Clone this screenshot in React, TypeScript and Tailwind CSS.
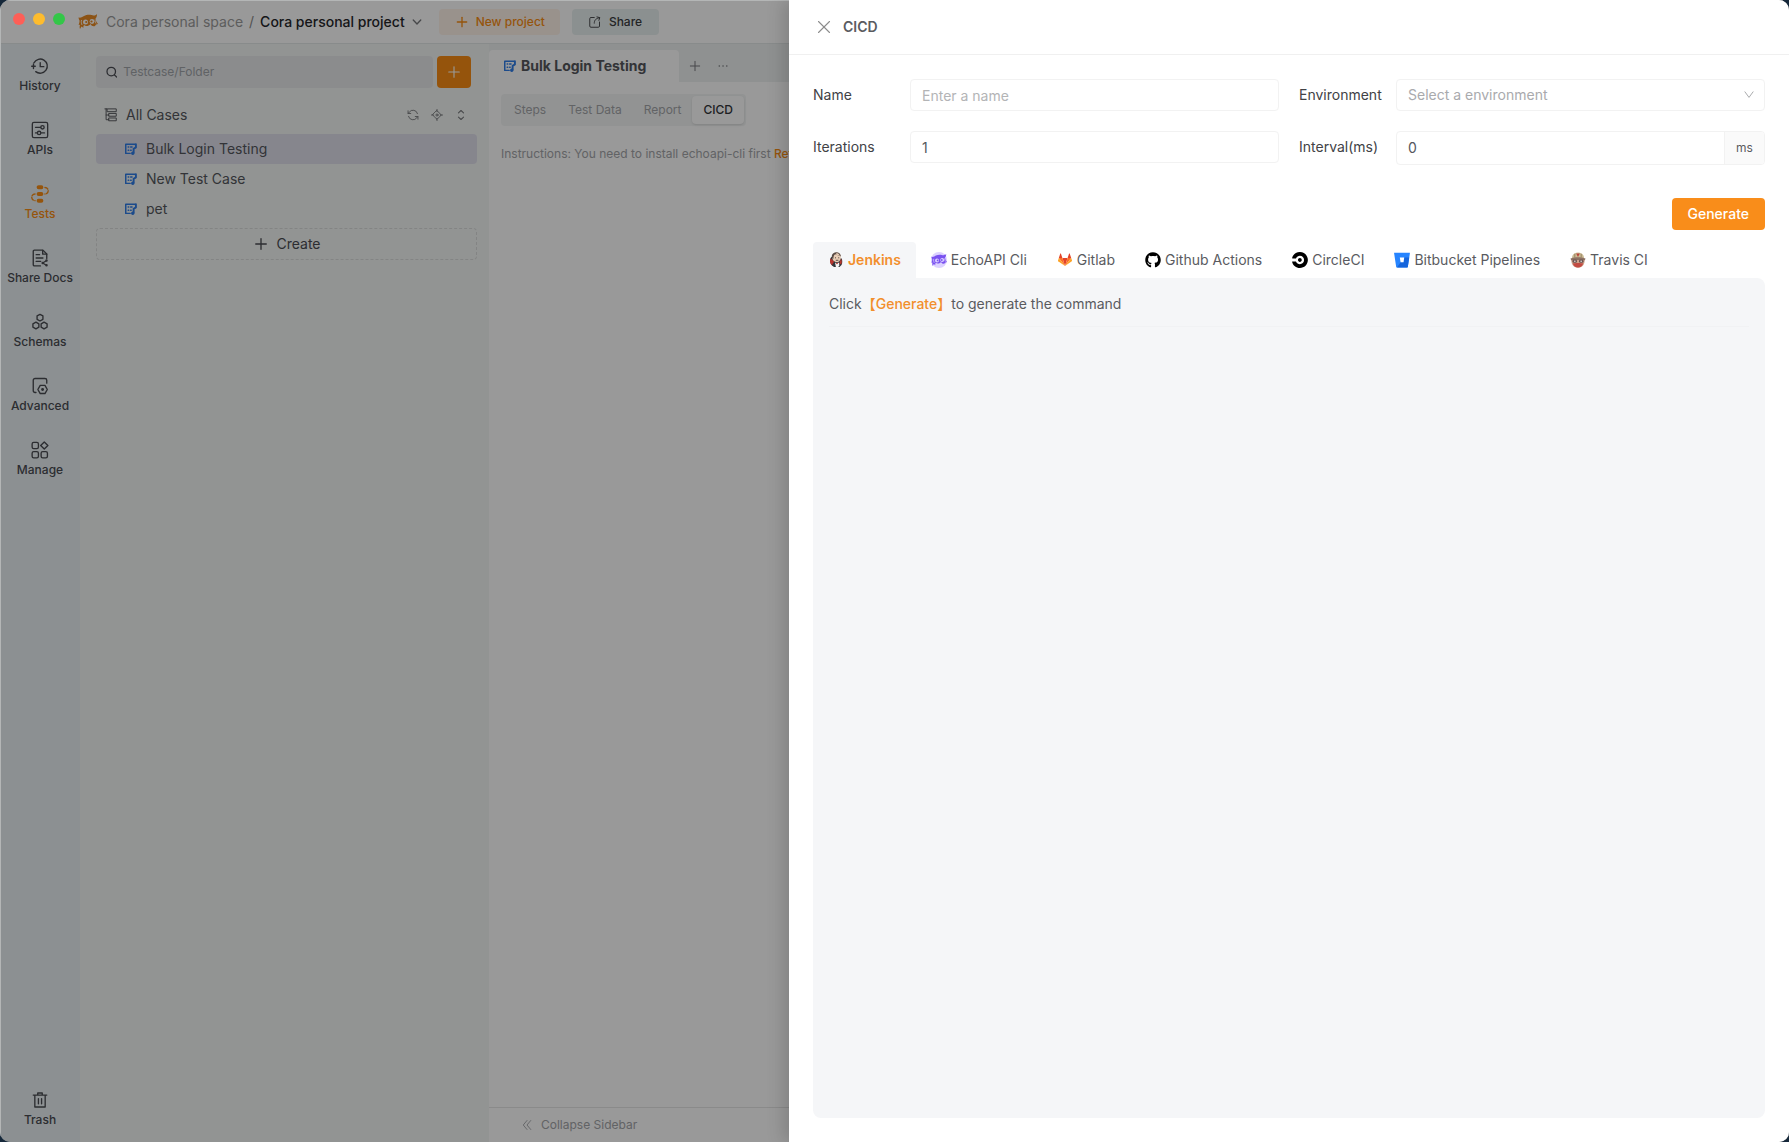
import { useState } from "react";
import type { ReactNode, SVGProps } from "react";
import { Plus, X } from "lucide-react";
import { FaGithub } from "react-icons/fa";
import { SiCircleci } from "react-icons/si";

// Shared wrapper for the 16px line icons
function Line({ children, ...props }: SVGProps<SVGSVGElement> & { children: ReactNode }) {
  return (
    <svg
      viewBox="0 0 16 16"
      fill="none"
      stroke="currentColor"
      strokeWidth="1.2"
      strokeLinecap="round"
      strokeLinejoin="round"
      aria-hidden="true"
      {...props}
    >
      {children}
    </svg>
  );
}

const HistoryIcon = () => (
  <Line className="size-[18px]">
    <path d="M2.6 5.2A6.3 6.3 0 1 1 4.2 13" />
    <path d="M2.2 6.2v4M.6 8.2h3.2" />
    <path d="M8.2 5v3.6h3.2" />
  </Line>
);

const ApisIcon = () => (
  <Line className="size-[18px]">
    <rect x="1.2" y="1.2" width="13.6" height="13.6" rx="1.4" />
    <path d="M4 5.6h4.6M4 10.6h1.6M8.8 10.6H12" />
    <circle cx="10.2" cy="5.6" r="1.5" />
    <circle cx="7.2" cy="10.6" r="1.5" />
  </Line>
);

const TestsIcon = () => (
  <Line className="size-[18px]">
    <rect x="5.6" y=".8" width="4.8" height="2.4" rx="1.2" fill="currentColor" />
    <rect x="5.6" y="6.8" width="4.8" height="2.4" rx="1.2" fill="currentColor" />
    <rect x="5.6" y="12.8" width="4.8" height="2.4" rx="1.2" fill="currentColor" />
    <path d="M12.4 2.2a2.9 2.9 0 0 1 0 5.800" strokeDasharray="3 1.400" />
    <path d="M3.6 8a2.9 2.9 0 0 0 0 5.900" strokeDasharray="3 1.400" />
  </Line>
);

const DocsIcon = () => (
  <Line className="size-[18px]">
    <path d="M8.4 15H3a1 1 0 0 1-1-1V2a1 1 0 0 1 1-1h7.6L14 4.4v4" />
    <path d="M10.4 1.2v3.4H14M4.6 5h3M4.6 8h6M4.6 11h4" />
    <path d="M13.6 10.4 10.4 12.4l3.2 2" />
    <circle cx="13.8" cy="10.3" r=".5" />
    <circle cx="10.4" cy="12.4" r=".5" />
    <circle cx="13.8" cy="14.5" r=".5" />
  </Line>
);

const SchemasIcon = () => (
  <Line className="size-[18px]">
    <path d="M8 1.200l2.600 1.400v3L8 7.100 5.400 5.600v-3z" />
    <path d="M4.400 8.100 7 9.600v3l-2.600 1.500-2.700-1.500v-3z" />
    <path d="M11.600 8.100l2.700 1.500v3l-2.700 1.500L9 12.600v-3z" />
  </Line>
);

const AdvancedIcon = () => (
  <Line className="size-[18px]">
    <path d="M4.400 13.800H3.600A1.600 1.600 0 0 1 2 12.200V2.900a1.600 1.600 0 0 1 1.600-1.600h8.800A1.600 1.600 0 0 1 14 2.900v2.600" />
    <path d="M8.200 7.500h4.200l2.100 3.600-2.100 3.600H8.200l-2.100-3.600z" />
    <circle cx="10.300" cy="11.100" r=".7" fill="currentColor" />
  </Line>
);

const ManageIcon = () => (
  <Line className="size-[18px]">
    <rect x="1" y="1.2" width="5.6" height="5.6" rx="1.4" />
    <path d="M11.8.8 15 4l-3.2 3.2L8.6 4z" />
    <rect x="1" y="9.4" width="5.6" height="5.6" rx="1.4" />
    <rect x="9" y="9.4" width="5.6" height="5.6" rx="1.4" />
  </Line>
);

const TrashIcon = () => (
  <Line className="size-[18px]">
    <path d="M2 3.6h12M6 3.4V1.8h4v1.600M3.400 3.800v10.400h9.200V3.800M6.600 6.800v4.600M9.400 6.800v4.600" />
  </Line>
);

const CaseIcon = () => (
  <Line className="size-3.5 shrink-0 text-[#2f7de8]" strokeWidth="1.700">
    <path d="M7 13H2V2.600h10.600" />
    <path d="M4.800 5.800h.6M7.600 5.800h1.600M4.800 9.400h.6M7.600 9.400h.6" />
    <path d="M13.600 2.600v3.600l-2.600 1.600v4.600" strokeWidth="2.200" />
    <circle cx="10" cy="12.800" r="1.100" fill="currentColor" />
  </Line>
);

const TreeIcon = () => (
  <Line className="size-3.5" strokeWidth="1.1">
    <path d="M2.400 1v12.400h3.200M2.400 8h3.200M1 1h2" />
    <rect x="4" y="1" width="10" height="3.2" />
    <rect x="5.8" y="6.2" width="8.2" height="3.2" />
    <rect x="5.8" y="11.4" width="8.2" height="3.2" />
  </Line>
);

const RefreshIcon = () => (
  <Line className="size-3">
    <path d="M14 6.200A6.200 6.200 0 0 0 3 4.200L1.400 6M1.400 2.400V6H5" />
    <path d="M2 9.800a6.200 6.200 0 0 0 11 2l1.600-1.800M14.600 13.600V10H11" />
  </Line>
);

const LocateIcon = () => (
  <Line className="size-3">
    <path d="M8 2.200 13.800 8 8 13.800 2.200 8zM8 .6v3M8 12.400v3M.6 8h3M12.400 8h3" />
    <circle cx="8" cy="8" r="1.4" />
  </Line>
);

const SortIcon = () => (
  <Line className="size-3" strokeWidth="1.4">
    <path d="M4.600 5.200 8 2l3.400 3.200M4.600 10.800 8 14l3.400-3.200" />
  </Line>
);

const ShareIcon = () => (
  <Line className="size-3">
    <path d="M7 2H2.600A1.600 1.600 0 0 0 1 3.600v9.800A1.600 1.600 0 0 0 2.600 15h9.800a1.600 1.600 0 0 0 1.600-1.600V8" />
    <path d="M7 9.600c0-4 2-6.400 7-7.200M10.600 1.200l3.800 1-1.200 3.600" />
  </Line>
);

function OwlMark({ className, eye }: { className: string; eye: string }) {
  return (
    <svg viewBox="0 0 40 30" className={className} aria-hidden="true">
      <path
        d="M1 7c5 1 8-1 11-3 7-4 15-2 19-1 3 0 5-1 7-3 0 4-1 7-3 9 1 5 2 8 5 11l-4 1-2 3c-4 1-7 0-9-4-4 5-10 5-13 2-1 2-2 4-1 6l-4-3-3 5c-1-3-1-5 0-8l-3-1c2-3 2-5 2-8-1-2-2-4-2-6z"
        fill="currentColor"
      />
      <circle cx="15" cy="16" r="5" fill={eye} />
      <circle cx="28" cy="15" r="4.800" fill={eye} />
      <circle cx="16.500" cy="16" r="2.200" fill="currentColor" />
      <circle cx="27" cy="15" r="2.200" fill="currentColor" />
      <path d="M7 12c-1 4 0 7 1 10M34 11c0 4 1 6 2 8" stroke={eye} strokeWidth="1.800" fill="none" />
    </svg>
  );
}

const JenkinsLogo = () => (
  <svg viewBox="0 0 16 16" className="size-4" aria-hidden="true">
    <path d="M3.400 5C1.400 7 1.600 11 4 13.600L6 15h5.500l2-2c1-2 1-4.500.2-6.500z" fill="#34353a" />
    <path d="M2.600 6.500c-1.200 2-.6 5 1.200 6.800l2.400-3.800z" fill="#b8362f" />
    <path d="M13 6.800c1 1.800 1 3.800.2 5.400l-2-.6z" fill="#b8362f" />
    <path d="M4 5c0-3 2-4.500 4.400-4.500S12.800 2 12.800 5.200c0 2.800-1.700 5-4 5S4 8 4 5z" fill="#e8cdb6" />
    <path d="M3.800 6C3.200 2 5.800.2 8.400.2c2.600 0 4.600 1.700 4.500 4.600l-1-1.300c-1.800.5-3.800-.8-4.800-1.200C6 3 5.600 4 5.300 7z" fill="#5a4c46" />
    <path d="M8 1.400c1.400-.4 3 .2 3.400 1.800L8.600 3.800z" fill="#e8cdb6" />
    <path d="M7 5.800h1M10.200 5.800h1M7.800 8.300h2.600" stroke="#3b2d27" strokeWidth=".8" />
    <path d="M7 10.400l2 1 2-1 .4 3.200-1.600 2H8z" fill="#f4f4f4" />
    <path d="M8 10.800l1 .6 1-.6v1.500l-1-.5-1 .5z" fill="#c23a32" />
  </svg>
);

const EchoLogo = () => (
  <span className="flex size-4 items-center justify-center rounded-full bg-[#dcd2ff] text-[#7a52f0]">
    <OwlMark className="h-3 w-4" eye="#dcd2ff" />
  </span>
);

const GitlabLogo = () => (
  <svg viewBox="0 0 16 16" className="size-4" aria-hidden="true">
    <path d="M8 14 10.600 6H5.400z" fill="#e24329" />
    <path d="M8 14 5.400 6H1.800z" fill="#fc6d26" />
    <path d="M1.800 6 1 8.400c-.1.300 0 .600.200.800L8 14z" fill="#fca326" />
    <path d="M1.800 6h3.600L3.900 1.600c-.1-.3-.5-.3-.6 0z" fill="#e24329" />
    <path d="M8 14l2.600-8h3.600z" fill="#fc6d26" />
    <path d="M14.200 6l.8 2.400c.1.300 0 .600-.2.800L8 14z" fill="#fca326" />
    <path d="M14.200 6h-3.600l1.500-4.400c.1-.3.500-.3.600 0z" fill="#e24329" />
  </svg>
);

const BitbucketLogo = () => (
  <svg viewBox="0 0 16 16" className="size-4" aria-hidden="true">
    <path d="M.5.7h15c.3 0 .5.200.4.500L13.800 15c0 .3-.3.500-.6.500H3c-.4 0-.7-.2-.8-.6L.1 1.200C0 .9.200.7.500.7z" fill="#2684ff" />
    <path d="M15.200 5.600h-4.900l-.8 4.600H6.600L3 15.400h10.300c.2 0 .4-.2.500-.4z" fill="#1565dc" />
    <path d="M5.800 5.600h4.400l-.7 4.600H6.600z" fill="#fff" />
  </svg>
);

const TravisLogo = () => (
  <svg viewBox="0 0 16 16" className="size-4" aria-hidden="true">
    <path d="M2 6C2 2.600 4.600.400 8 .400S14 2.600 14 6z" fill="#cbbb95" />
    <path d="M4.800 1.800v3.600M11.200 1.800v3.600" stroke="#94805c" strokeWidth=".9" />
    <path d="M6.200 1.600h3.600L8 5z" fill="#b8433a" />
    <path d="M.5 6.400c4.200-1.700 10.800-1.700 15 0l-.7 2H1.200z" fill="#8d7264" />
    <path d="M1.400 8h13.200c.3 3.600-1.800 7.700-6.600 7.700S1.100 11.600 1.400 8z" fill="#cfa28a" />
    <rect x="2.400" y="7.600" width="4.600" height="3.200" rx="1.400" fill="#6b5350" />
    <rect x="9" y="7.600" width="4.600" height="3.200" rx="1.400" fill="#6b5350" />
    <path d="M4 9.200h1.600M10.400 9.200H12" stroke="#fff" strokeWidth=".9" />
    <path d="M2.800 11.600c2.400-.8 8-.8 10.400 0-.8 2.600-2.600 4-5.200 4s-4.400-1.400-5.200-4z" fill="#c24a42" />
  </svg>
);

const navItems = [
  { label: "History", icon: <HistoryIcon /> },
  { label: "APIs", icon: <ApisIcon /> },
  { label: "Tests", icon: <TestsIcon />, active: true },
  { label: "Share Docs", icon: <DocsIcon /> },
  { label: "Schemas", icon: <SchemasIcon /> },
  { label: "Advanced", icon: <AdvancedIcon /> },
  { label: "Manage", icon: <ManageIcon /> },
];

const cases = ["Bulk Login Testing", "New Test Case", "pet"];

const ciTabs = [
  { label: "Jenkins", icon: <JenkinsLogo /> },
  { label: "EchoAPI Cli", icon: <EchoLogo /> },
  { label: "Gitlab", icon: <GitlabLogo /> },
  { label: "Github Actions", icon: <FaGithub className="size-4 text-black" /> },
  { label: "CircleCI", icon: <SiCircleci className="size-4 text-black" /> },
  { label: "Bitbucket Pipelines", icon: <BitbucketLogo /> },
  { label: "Travis CI", icon: <TravisLogo /> },
];

function NavButton({ label, icon, active }: { label: string; icon: ReactNode; active?: boolean }) {
  return (
    <button
      type="button"
      className={`flex h-16 w-full flex-col items-center gap-px pt-[13px] text-xs leading-5 font-medium ${
        active ? "text-[#f98d14]" : "text-[#4a4c52]"
      }`}
    >
      {icon}
      {label}
    </button>
  );
}

function TopBar() {
  return (
    <header className="flex h-11 shrink-0 items-center border-b border-[#e3e8e8] bg-white pl-[78px] text-sm">
      <OwlMark className="h-[15px] w-5 text-[#e98a24]" eye="#ffffff" />
      <a href="#space" className="ml-2 text-[#9b9b9b]">
        Cora personal space
      </a>
      <span className="mx-1.5 text-[#8a8a8a]">/</span>
      <button type="button" className="flex items-center gap-1.5 font-medium text-[#26272b]">
        Cora personal project
        <Line className="size-3 text-[#77787c]" strokeWidth="1.8">
          <path d="M3 5.400 8 10.600 13 5.400" />
        </Line>
      </button>
      <button
        type="button"
        className="ml-4 flex h-[26px] items-center gap-1.5 rounded bg-[#fff3ea] px-[15px] text-xs font-medium text-[#f98d14]"
      >
        <Plus className="size-4" />
        New project
      </button>
      <button
        type="button"
        className="ml-3 flex h-[26px] items-center gap-2 rounded bg-[#e8f0f0] px-[17px] text-xs font-medium text-[#3b3c40]"
      >
        <ShareIcon />
        Share
      </button>
    </header>
  );
}

function CaseList() {
  return (
    <aside className="flex w-[409px] shrink-0 flex-col bg-[#f4f7f5] px-4 pt-3 pr-3">
      <div className="flex gap-1">
        <label className="flex h-8 flex-1 items-center gap-1.5 rounded bg-[#e8eaec] px-2.5">
          <Line className="size-3 text-[#4a4c52]" strokeWidth="1.8">
            <circle cx="7.400" cy="7.400" r="6" />
            <path d="m12 12 3 3" />
          </Line>
          <input
            aria-label="Testcase/Folder"
            placeholder="Testcase/Folder"
            className="w-full bg-transparent text-xs outline-none placeholder:text-[#a0a4a8]"
          />
        </label>
        <button
          type="button"
          aria-label="Add"
          className="mr-1.5 flex h-8 w-[34px] items-center justify-center rounded bg-[#f98d14] text-white"
        >
          <Plus className="size-[18px]" strokeWidth={1.5} />
        </button>
      </div>

      <div className="mt-3 flex h-[30px] items-center gap-2 pr-2.5 pl-2 text-sm text-[#55575d]">
        <TreeIcon />
        <span className="flex-1">All Cases</span>
        <div className="flex gap-3 text-[#77797d]">
          <button type="button" aria-label="Refresh">
            <RefreshIcon />
          </button>
          <button type="button" aria-label="Locate">
            <LocateIcon />
          </button>
          <button type="button" aria-label="Sort">
            <SortIcon />
          </button>
        </div>
      </div>

      <ul className="mt-1 text-sm text-[#55575d]">
        {cases.map((name, i) => (
          <li key={name}>
            <button
              type="button"
              className={`flex h-[30px] w-full items-center gap-2 rounded pl-7 ${i === 0 ? "bg-[#dfe0ec]" : ""}`}
            >
              <CaseIcon />
              {name}
            </button>
          </li>
        ))}
      </ul>

      <button
        type="button"
        className="mt-1 flex h-8 items-center justify-center gap-1.5 rounded border border-dashed border-[#dadddc] text-sm text-[#4a4c52]"
      >
        <Plus className="size-[18px]" strokeWidth={1.8} />
        Create
      </button>
    </aside>
  );
}

function Workspace() {
  return (
    <main className="flex min-w-0 flex-1 flex-col bg-white">
      <div className="flex h-[38px] shrink-0 items-end bg-[#eff2f2]">
        <button
          type="button"
          className="flex h-8 w-[190px] items-center gap-1 rounded-t bg-white pl-3.5 text-sm font-bold text-[#55575d]"
        >
          <CaseIcon />
          Bulk Login Testing
        </button>
        <button type="button" aria-label="New tab" className="ml-2 flex h-8 items-center text-[#77797d]">
          <Plus className="size-4" strokeWidth={1.5} />
        </button>
        <button type="button" aria-label="More" className="ml-3.5 flex h-8 items-center text-[#77797d]">
          <Line className="size-3" strokeWidth="2">
            <path d="M3 8h.1M8 8h.1M13 8h.1" />
          </Line>
        </button>
      </div>

      <div className="flex-1 px-3 pt-3 text-xs text-[#a3a5a9]">
        <div className="flex h-8 w-max items-center rounded bg-[#f4f6f6] px-0.5">
          <button type="button" className="px-[11px]">Steps</button>
          <button type="button" className="px-[11px]">Test Data</button>
          <button type="button" className="px-[11px]">Report</button>
          <button type="button" className="h-7 rounded bg-white px-[11px] font-medium text-[#33353a] shadow">
            CICD
          </button>
        </div>
        <p className="mt-[18px] leading-5 whitespace-nowrap">
          Instructions: You need to install echoapi-cli first{" "}
          <a href="#reference" className="font-medium text-[#f98d14]">
            Refer
          </a>
        </p>
      </div>

      <footer className="flex h-[35px] shrink-0 items-center border-t border-[#e6e6e6] pl-8">
        <button type="button" className="flex items-center gap-2 text-xs text-[#a3a5a9]">
          <Line className="size-3">
            <path d="M8 2 3 8l5 6M13 2 8 8l5 6" />
          </Line>
          Collapse Sidebar
        </button>
      </footer>
    </main>
  );
}

const fieldClass =
  "h-8 w-full min-w-0 rounded border border-[#f2f2f2] bg-white px-[11px] text-sm text-[#55575d] outline-none placeholder:text-[#b3b4b6]";

function Field({ id, label, children }: { id: string; label: string; children: ReactNode }) {
  return (
    <div className="flex items-start">
      <label htmlFor={id} className="w-[97px] shrink-0 leading-8 text-[#414246]">
        {label}
      </label>
      <div className="relative flex min-w-0 flex-1">{children}</div>
    </div>
  );
}

function CicdDrawer() {
  const [tab, setTab] = useState("Jenkins");

  return (
    <section
      role="dialog"
      aria-label="CICD"
      className="absolute inset-y-0 right-0 flex w-[1000px] max-w-full flex-col bg-white text-sm shadow-[-6px_0_16px_rgba(0,0,0,0.15)]"
    >
      <header className="flex h-[55px] shrink-0 items-center gap-2 border-b border-[#f0f0f0] px-6">
        <button type="button" aria-label="Close" className="text-[#8c8c8c]">
          <X className="size-[22px]" strokeWidth={1.2} />
        </button>
        <h2 className="font-semibold text-[#5a5b5f]">CICD</h2>
      </header>

      <div className="flex min-h-0 flex-1 flex-col p-6">
        <div className="grid grid-cols-2 gap-5">
          <Field id="name" label="Name">
            <input id="name" placeholder="Enter a name" className={fieldClass} />
          </Field>
          <Field id="environment" label="Environment">
            <select id="environment" defaultValue="" className={`${fieldClass} appearance-none text-[#a9aaad]`}>
              <option value="">Select a environment</option>
            </select>
            <Line className="pointer-events-none absolute top-2.5 right-2.5 size-3 text-[#a0a1a4]">
              <path d="M2.600 3.800 8 11.200l5.400-7.400" />
            </Line>
          </Field>
          <Field id="iterations" label="Iterations">
            <input id="iterations" defaultValue="1" className={fieldClass} />
          </Field>
          <Field id="interval" label="Interval(ms)">
            <div className="flex h-[34px] w-full overflow-hidden rounded border border-[#f2f2f2]">
              <input
                id="interval"
                defaultValue="0"
                className="min-w-0 flex-1 px-[11px] text-sm text-[#55575d] outline-none"
              />
              <span className="flex w-10 items-center justify-center border-l border-[#f2f2f2] bg-[#fafafa] text-xs text-[#5a5b5f]">
                ms
              </span>
            </div>
          </Field>
        </div>

        <button
          type="button"
          className="mt-[33px] h-8 self-end rounded bg-[#f98d1a] px-4 font-medium text-white"
        >
          Generate
        </button>

        <div role="tablist" className="mt-3 flex text-[#5a5b5f]">
          {ciTabs.map((t) => (
            <button
              key={t.label}
              type="button"
              role="tab"
              aria-selected={tab === t.label}
              onClick={() => setTab(t.label)}
              className={`flex h-9 items-center gap-1 rounded-t px-[15px] whitespace-nowrap ${
                tab === t.label ? "bg-[#f5f6f8] font-semibold text-[#f28f2c]" : ""
              }`}
            >
              {t.icon}
              {t.label}
            </button>
          ))}
        </div>

        <div className="flex-1 rounded-b-lg rounded-tr-lg bg-[#f5f6f8] px-4 text-[#5a5b5f]">
          <p className="border-b border-[#f1f2f4] pt-4 pb-3 leading-5">
            Click
            <span className="font-medium text-[#f28f2c]">【Generate】</span>
            to generate the command
          </p>
        </div>
      </div>
    </section>
  );
}

export default function App() {
  return (
    <div className="h-screen bg-[#16283a] font-['Inter','Noto_Sans_CJK_SC',sans-serif]">
      <div className="relative flex h-full flex-col overflow-hidden rounded-[10px]">
        <TopBar />
        <div className="flex min-h-0 flex-1">
          <nav className="flex w-20 shrink-0 flex-col bg-[#e9f0f3]">
            {navItems.map((item) => (
              <NavButton key={item.label} {...item} />
            ))}
            <div className="mt-auto">
              <NavButton label="Trash" icon={<TrashIcon />} />
            </div>
          </nav>
          <CaseList />
          <Workspace />
        </div>

        <div className="absolute inset-0 border-t border-l border-[#b4b6b6] bg-black/40" />

        {/* Window controls stay lit above the mask */}
        <div className="absolute top-[13px] left-[13px] flex gap-2">
          <button type="button" aria-label="Close window" className="size-3 rounded-full bg-[#fe5f57]" />
          <button type="button" aria-label="Minimize window" className="size-3 rounded-full bg-[#febc2e]" />
          <button type="button" aria-label="Zoom window" className="size-3 rounded-full bg-[#33c748]" />
        </div>

        <CicdDrawer />
      </div>
    </div>
  );
}
